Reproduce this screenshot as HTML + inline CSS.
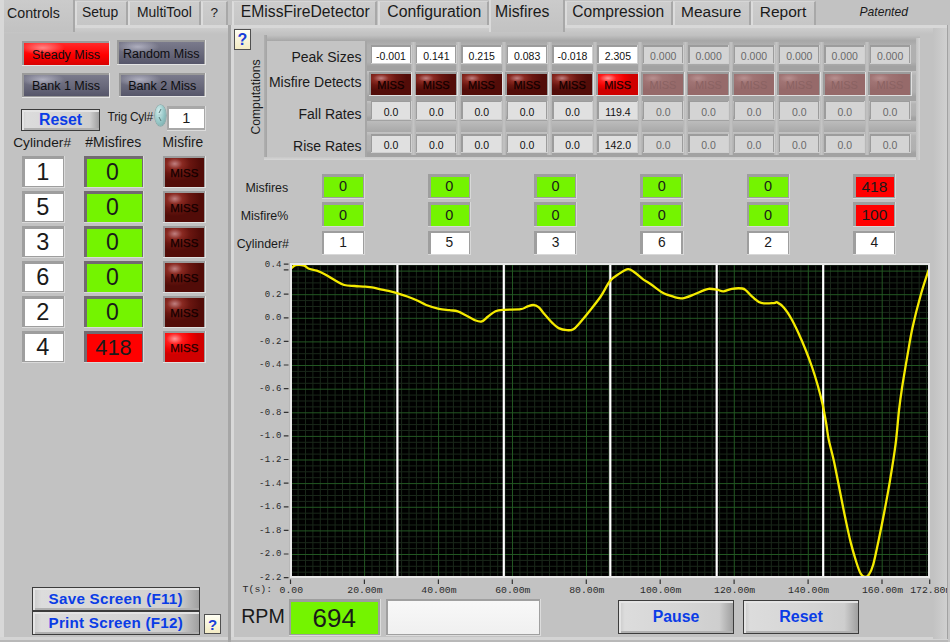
<!DOCTYPE html><html><head><meta charset="utf-8"><style>html,body{margin:0;padding:0;}body{width:950px;height:642px;position:relative;overflow:hidden;background:#c2c2c2;font-family:'Liberation Sans', sans-serif;color:#1a1a1a;}</style></head><body>
<div style="position:absolute;left:0.0px;top:25.0px;width:228.0px;height:617.0px;background:#c2c2c2;box-sizing:border-box;"></div>
<div style="position:absolute;left:0.0px;top:25.0px;width:228.0px;height:3.0px;background:#d8d8d8;"></div>
<div style="position:absolute;left:0.0px;top:28.0px;width:228.0px;height:6.0px;background:linear-gradient(180deg,#cdcdcd,#c2c2c2);"></div>
<div style="position:absolute;left:0.0px;top:25.0px;width:3.5px;height:617.0px;background:#d8d8d8;"></div>
<div style="position:absolute;left:0.0px;top:637.0px;width:228.0px;height:3.0px;background:#d4d4d4;"></div>
<div style="position:absolute;left:0.0px;top:640.0px;width:228.0px;height:2.0px;background:#b8b8b8;"></div>
<div style="position:absolute;left:75.0px;top:1.0px;width:52.5px;height:24.0px;background:linear-gradient(180deg,#cdcdcd 0%,#c6c6c6 100%);border-left:2.5px solid #dcdcdc;border-top:1px solid #d6d6d6;border-right:2px solid #a8a8a8;box-sizing:border-box;"></div>
<div style="position:absolute;left:82.0px;top:6.0px;font-size:13.9px;line-height:13.9px;white-space:nowrap;font-family:'Liberation Sans', sans-serif;">Setup</div>
<div style="position:absolute;left:127.5px;top:1.0px;width:73.5px;height:24.0px;background:linear-gradient(180deg,#cdcdcd 0%,#c6c6c6 100%);border-left:2.5px solid #dcdcdc;border-top:1px solid #d6d6d6;border-right:2px solid #a8a8a8;box-sizing:border-box;"></div>
<div style="position:absolute;left:137.0px;top:6.0px;font-size:13.9px;line-height:13.9px;white-space:nowrap;font-family:'Liberation Sans', sans-serif;">MultiTool</div>
<div style="position:absolute;left:201.0px;top:1.0px;width:26.5px;height:24.0px;background:linear-gradient(180deg,#cdcdcd 0%,#c6c6c6 100%);border-left:2.5px solid #dcdcdc;border-top:1px solid #d6d6d6;border-right:2px solid #a8a8a8;box-sizing:border-box;"></div>
<div style="position:absolute;left:210.6px;top:6.3px;font-size:13.6px;line-height:13.6px;white-space:nowrap;font-family:'Liberation Sans', sans-serif;">?</div>
<div style="position:absolute;left:0.0px;top:0.0px;width:75.0px;height:32.0px;background:linear-gradient(180deg,#cbcbcb 0%,#c2c2c2 100%);border-left:2.5px solid #dadada;border-right:2px solid #a8a8a8;box-sizing:border-box;"></div>
<div style="position:absolute;left:7.0px;top:6.3px;font-size:14.2px;line-height:14.2px;white-space:nowrap;font-family:'Liberation Sans', sans-serif;">Controls</div>
<div style="position:absolute;left:0.0px;top:0.0px;width:3.5px;height:32.0px;background:#d8d8d8;"></div>
<div style="position:absolute;left:22.0px;top:41.0px;width:88.0px;height:25.0px;background:#9a9a9a;border-bottom:1px solid #e4e4e4;border-right:1px solid #e4e4e4;box-sizing:border-box;"></div>
<div style="position:absolute;left:23.5px;top:42.5px;width:85.0px;height:22.0px;background:linear-gradient(180deg,#ff2a2a 0%,#ff0000 55%,#d80000 100%);"></div>
<div style="position:absolute;left:23.5px;top:42.5px;width:85.0px;height:22.0px;background:radial-gradient(ellipse 22px 7px at 22% 22%, rgba(255,170,170,0.75), rgba(255,0,0,0) 100%);"></div>
<div style="position:absolute;left:23.5px;top:48.5px;width:85.0px;font-size:12.5px;line-height:12.5px;white-space:nowrap;font-family:'Liberation Sans', sans-serif;text-align:center;color:#0d0d10;">Steady Miss</div>
<div style="position:absolute;left:117.0px;top:40.0px;width:88.5px;height:25.0px;background:#9a9a9a;border-bottom:1px solid #e4e4e4;border-right:1px solid #e4e4e4;box-sizing:border-box;"></div>
<div style="position:absolute;left:118.5px;top:41.5px;width:85.5px;height:22.0px;background:linear-gradient(180deg,#7a7a8c 0%,#6a6a7c 50%,#56566a 100%);"></div>
<div style="position:absolute;left:118.5px;top:41.5px;width:85.5px;height:22.0px;background:radial-gradient(ellipse 22px 7px at 22% 22%, rgba(200,200,215,0.7), rgba(120,120,140,0) 100%);"></div>
<div style="position:absolute;left:118.5px;top:47.5px;width:85.5px;font-size:12.5px;line-height:12.5px;white-space:nowrap;font-family:'Liberation Sans', sans-serif;text-align:center;color:#0d0d10;">Random Miss</div>
<div style="position:absolute;left:22.0px;top:73.0px;width:88.0px;height:24.5px;background:#9a9a9a;border-bottom:1px solid #e4e4e4;border-right:1px solid #e4e4e4;box-sizing:border-box;"></div>
<div style="position:absolute;left:23.5px;top:74.5px;width:85.0px;height:21.5px;background:linear-gradient(180deg,#7a7a8c 0%,#6a6a7c 50%,#56566a 100%);"></div>
<div style="position:absolute;left:23.5px;top:74.5px;width:85.0px;height:21.5px;background:radial-gradient(ellipse 22px 7px at 22% 22%, rgba(200,200,215,0.7), rgba(120,120,140,0) 100%);"></div>
<div style="position:absolute;left:23.5px;top:80.3px;width:85.0px;font-size:12.5px;line-height:12.5px;white-space:nowrap;font-family:'Liberation Sans', sans-serif;text-align:center;color:#0d0d10;">Bank 1 Miss</div>
<div style="position:absolute;left:119.0px;top:73.0px;width:86.5px;height:24.0px;background:#9a9a9a;border-bottom:1px solid #e4e4e4;border-right:1px solid #e4e4e4;box-sizing:border-box;"></div>
<div style="position:absolute;left:120.5px;top:74.5px;width:83.5px;height:21.0px;background:linear-gradient(180deg,#7a7a8c 0%,#6a6a7c 50%,#56566a 100%);"></div>
<div style="position:absolute;left:120.5px;top:74.5px;width:83.5px;height:21.0px;background:radial-gradient(ellipse 22px 7px at 22% 22%, rgba(200,200,215,0.7), rgba(120,120,140,0) 100%);"></div>
<div style="position:absolute;left:120.5px;top:80.0px;width:83.5px;font-size:12.5px;line-height:12.5px;white-space:nowrap;font-family:'Liberation Sans', sans-serif;text-align:center;color:#0d0d10;">Bank 2 Miss</div>
<div style="position:absolute;left:21.0px;top:108.5px;width:79.0px;height:22.5px;background:linear-gradient(90deg,#c8c8c8 0%,#dcdcdc 5%,#d6d6d6 50%,#cecece 88%,#a0a0a0 100%);border:1px solid #3c3c3c;box-sizing:border-box;box-shadow:inset 2px 2px 0 #e4e4e4, inset 0 -2px 0 #b0b0b0;"></div>
<div style="position:absolute;left:21.0px;top:112.1px;width:79px;font-size:15.8px;line-height:15.8px;white-space:nowrap;font-family:'Liberation Sans', sans-serif;text-align:center;color:#0a3ce6;font-weight:bold;word-spacing:0px;letter-spacing:0px;">Reset</div>
<div style="position:absolute;left:107.6px;top:111.0px;font-size:12px;line-height:12px;white-space:nowrap;font-family:'Liberation Sans', sans-serif;letter-spacing:-0.25px;">Trig Cyl#</div>
<div style="position:absolute;left:155.3px;top:104.6px;width:10.5px;height:21.0px;background:radial-gradient(ellipse at 35% 30%, #d4eeee 0%, #9ccccc 45%, #6c9e9e 100%);border-radius:50%;box-shadow:0 0 0 0.6px #78a0a0;"></div>
<svg style="position:absolute;left:155px;top:104px" width="11" height="22"><path d="M4 9 L6 5" stroke="#5a7a7a" stroke-width="1" fill="none"/><path d="M4 13 L6 17" stroke="#5a7a7a" stroke-width="1" fill="none"/><path d="M3 11 L8 11" stroke="#aacccc" stroke-width="0.8"/></svg>
<div style="position:absolute;left:167.0px;top:106.0px;width:39.0px;height:25.0px;background:#a8a8a8;border-right:1px solid #dcdcdc;border-bottom:1px solid #dcdcdc;box-sizing:border-box;"></div>
<div style="position:absolute;left:169.0px;top:108.7px;width:34.6px;height:19.7px;background:#fff;"></div>
<div style="position:absolute;left:171.3px;top:111.2px;width:30px;font-size:14.5px;line-height:14.5px;white-space:nowrap;font-family:'Liberation Sans', sans-serif;text-align:center;">1</div>
<div style="position:absolute;left:13.2px;top:135.6px;font-size:13.7px;line-height:13.7px;white-space:nowrap;font-family:'Liberation Sans', sans-serif;">Cylinder#</div>
<div style="position:absolute;left:85.3px;top:135.3px;font-size:14px;line-height:14px;white-space:nowrap;font-family:'Liberation Sans', sans-serif;">#Misfires</div>
<div style="position:absolute;left:162.6px;top:135.5px;font-size:13.8px;line-height:13.8px;white-space:nowrap;font-family:'Liberation Sans', sans-serif;">Misfire</div>
<div style="position:absolute;left:21.5px;top:155.5px;width:43.0px;height:32.0px;background:#9e9e9e;border-right:1px solid #dadada;border-bottom:1px solid #dadada;box-sizing:border-box;"></div>
<div style="position:absolute;left:24.7px;top:158.8px;width:38.2px;height:26.8px;background:#fff;"></div>
<div style="position:absolute;left:23.8px;top:161.1px;width:38px;font-size:23.5px;line-height:23.5px;white-space:nowrap;font-family:'Liberation Sans', sans-serif;text-align:center;">1</div>
<div style="position:absolute;left:84.1px;top:155.5px;width:60.2px;height:32.0px;background:#726a70;border-right:1px solid #d8d8d8;border-bottom:1px solid #d8d8d8;box-sizing:border-box;"></div>
<div style="position:absolute;left:86.8px;top:158.5px;width:55.4px;height:28.2px;background:#74f400;"></div>
<div style="position:absolute;left:85.0px;top:161.0px;width:55px;font-size:23px;line-height:23px;white-space:nowrap;font-family:'Liberation Sans', sans-serif;text-align:center;">0</div>
<div style="position:absolute;left:162.8px;top:156.0px;width:43.1px;height:31.7px;background:#9c9c9c;border-bottom:1px solid #e0e0e0;border-right:1px solid #e0e0e0;box-sizing:border-box;"></div>
<div style="position:absolute;left:164.5px;top:158.0px;width:39.7px;height:28.7px;background:radial-gradient(ellipse 65% 60% at 25% 20%, #c08080 0%, #8a2a22 30%, #6a1610 60%, #520c08 100%);"></div>
<div style="position:absolute;left:164.5px;top:167.8px;width:39.69999999999999px;font-size:11.5px;line-height:11.5px;white-space:nowrap;font-family:'Liberation Sans', sans-serif;text-align:center;color:#120000;-webkit-text-stroke:0.25px #120000;">MISS</div>
<div style="position:absolute;left:21.5px;top:190.6px;width:43.0px;height:32.0px;background:#9e9e9e;border-right:1px solid #dadada;border-bottom:1px solid #dadada;box-sizing:border-box;"></div>
<div style="position:absolute;left:24.7px;top:193.9px;width:38.2px;height:26.8px;background:#fff;"></div>
<div style="position:absolute;left:23.8px;top:196.2px;width:38px;font-size:23.5px;line-height:23.5px;white-space:nowrap;font-family:'Liberation Sans', sans-serif;text-align:center;">5</div>
<div style="position:absolute;left:84.1px;top:190.6px;width:60.2px;height:32.0px;background:#726a70;border-right:1px solid #d8d8d8;border-bottom:1px solid #d8d8d8;box-sizing:border-box;"></div>
<div style="position:absolute;left:86.8px;top:193.6px;width:55.4px;height:28.2px;background:#74f400;"></div>
<div style="position:absolute;left:85.0px;top:196.1px;width:55px;font-size:23px;line-height:23px;white-space:nowrap;font-family:'Liberation Sans', sans-serif;text-align:center;">0</div>
<div style="position:absolute;left:162.8px;top:191.1px;width:43.1px;height:31.7px;background:#9c9c9c;border-bottom:1px solid #e0e0e0;border-right:1px solid #e0e0e0;box-sizing:border-box;"></div>
<div style="position:absolute;left:164.5px;top:193.1px;width:39.7px;height:28.7px;background:radial-gradient(ellipse 65% 60% at 25% 20%, #c08080 0%, #8a2a22 30%, #6a1610 60%, #520c08 100%);"></div>
<div style="position:absolute;left:164.5px;top:202.8px;width:39.69999999999999px;font-size:11.5px;line-height:11.5px;white-space:nowrap;font-family:'Liberation Sans', sans-serif;text-align:center;color:#120000;-webkit-text-stroke:0.25px #120000;">MISS</div>
<div style="position:absolute;left:21.5px;top:225.6px;width:43.0px;height:32.0px;background:#9e9e9e;border-right:1px solid #dadada;border-bottom:1px solid #dadada;box-sizing:border-box;"></div>
<div style="position:absolute;left:24.7px;top:228.9px;width:38.2px;height:26.8px;background:#fff;"></div>
<div style="position:absolute;left:23.8px;top:231.2px;width:38px;font-size:23.5px;line-height:23.5px;white-space:nowrap;font-family:'Liberation Sans', sans-serif;text-align:center;">3</div>
<div style="position:absolute;left:84.1px;top:225.6px;width:60.2px;height:32.0px;background:#726a70;border-right:1px solid #d8d8d8;border-bottom:1px solid #d8d8d8;box-sizing:border-box;"></div>
<div style="position:absolute;left:86.8px;top:228.6px;width:55.4px;height:28.2px;background:#74f400;"></div>
<div style="position:absolute;left:85.0px;top:231.2px;width:55px;font-size:23px;line-height:23px;white-space:nowrap;font-family:'Liberation Sans', sans-serif;text-align:center;">0</div>
<div style="position:absolute;left:162.8px;top:226.1px;width:43.1px;height:31.7px;background:#9c9c9c;border-bottom:1px solid #e0e0e0;border-right:1px solid #e0e0e0;box-sizing:border-box;"></div>
<div style="position:absolute;left:164.5px;top:228.1px;width:39.7px;height:28.7px;background:radial-gradient(ellipse 65% 60% at 25% 20%, #c08080 0%, #8a2a22 30%, #6a1610 60%, #520c08 100%);"></div>
<div style="position:absolute;left:164.5px;top:237.9px;width:39.69999999999999px;font-size:11.5px;line-height:11.5px;white-space:nowrap;font-family:'Liberation Sans', sans-serif;text-align:center;color:#120000;-webkit-text-stroke:0.25px #120000;">MISS</div>
<div style="position:absolute;left:21.5px;top:260.7px;width:43.0px;height:32.0px;background:#9e9e9e;border-right:1px solid #dadada;border-bottom:1px solid #dadada;box-sizing:border-box;"></div>
<div style="position:absolute;left:24.7px;top:264.0px;width:38.2px;height:26.8px;background:#fff;"></div>
<div style="position:absolute;left:23.8px;top:266.3px;width:38px;font-size:23.5px;line-height:23.5px;white-space:nowrap;font-family:'Liberation Sans', sans-serif;text-align:center;">6</div>
<div style="position:absolute;left:84.1px;top:260.7px;width:60.2px;height:32.0px;background:#726a70;border-right:1px solid #d8d8d8;border-bottom:1px solid #d8d8d8;box-sizing:border-box;"></div>
<div style="position:absolute;left:86.8px;top:263.7px;width:55.4px;height:28.2px;background:#74f400;"></div>
<div style="position:absolute;left:85.0px;top:266.2px;width:55px;font-size:23px;line-height:23px;white-space:nowrap;font-family:'Liberation Sans', sans-serif;text-align:center;">0</div>
<div style="position:absolute;left:162.8px;top:261.2px;width:43.1px;height:31.7px;background:#9c9c9c;border-bottom:1px solid #e0e0e0;border-right:1px solid #e0e0e0;box-sizing:border-box;"></div>
<div style="position:absolute;left:164.5px;top:263.2px;width:39.7px;height:28.7px;background:radial-gradient(ellipse 65% 60% at 25% 20%, #c08080 0%, #8a2a22 30%, #6a1610 60%, #520c08 100%);"></div>
<div style="position:absolute;left:164.5px;top:272.9px;width:39.69999999999999px;font-size:11.5px;line-height:11.5px;white-space:nowrap;font-family:'Liberation Sans', sans-serif;text-align:center;color:#120000;-webkit-text-stroke:0.25px #120000;">MISS</div>
<div style="position:absolute;left:21.5px;top:295.7px;width:43.0px;height:32.0px;background:#9e9e9e;border-right:1px solid #dadada;border-bottom:1px solid #dadada;box-sizing:border-box;"></div>
<div style="position:absolute;left:24.7px;top:299.0px;width:38.2px;height:26.8px;background:#fff;"></div>
<div style="position:absolute;left:23.8px;top:301.3px;width:38px;font-size:23.5px;line-height:23.5px;white-space:nowrap;font-family:'Liberation Sans', sans-serif;text-align:center;">2</div>
<div style="position:absolute;left:84.1px;top:295.7px;width:60.2px;height:32.0px;background:#726a70;border-right:1px solid #d8d8d8;border-bottom:1px solid #d8d8d8;box-sizing:border-box;"></div>
<div style="position:absolute;left:86.8px;top:298.7px;width:55.4px;height:28.2px;background:#74f400;"></div>
<div style="position:absolute;left:85.0px;top:301.3px;width:55px;font-size:23px;line-height:23px;white-space:nowrap;font-family:'Liberation Sans', sans-serif;text-align:center;">0</div>
<div style="position:absolute;left:162.8px;top:296.2px;width:43.1px;height:31.7px;background:#9c9c9c;border-bottom:1px solid #e0e0e0;border-right:1px solid #e0e0e0;box-sizing:border-box;"></div>
<div style="position:absolute;left:164.5px;top:298.2px;width:39.7px;height:28.7px;background:radial-gradient(ellipse 65% 60% at 25% 20%, #c08080 0%, #8a2a22 30%, #6a1610 60%, #520c08 100%);"></div>
<div style="position:absolute;left:164.5px;top:308.0px;width:39.69999999999999px;font-size:11.5px;line-height:11.5px;white-space:nowrap;font-family:'Liberation Sans', sans-serif;text-align:center;color:#120000;-webkit-text-stroke:0.25px #120000;">MISS</div>
<div style="position:absolute;left:21.5px;top:330.8px;width:43.0px;height:32.0px;background:#9e9e9e;border-right:1px solid #dadada;border-bottom:1px solid #dadada;box-sizing:border-box;"></div>
<div style="position:absolute;left:24.7px;top:334.1px;width:38.2px;height:26.8px;background:#fff;"></div>
<div style="position:absolute;left:23.8px;top:336.4px;width:38px;font-size:23.5px;line-height:23.5px;white-space:nowrap;font-family:'Liberation Sans', sans-serif;text-align:center;">4</div>
<div style="position:absolute;left:84.1px;top:330.8px;width:60.2px;height:32.0px;background:#726a70;border-right:1px solid #d8d8d8;border-bottom:1px solid #d8d8d8;box-sizing:border-box;"></div>
<div style="position:absolute;left:86.8px;top:333.8px;width:55.4px;height:28.2px;background:#ff0000;"></div>
<div style="position:absolute;left:86.0px;top:337.3px;width:55px;font-size:21.8px;line-height:21.8px;white-space:nowrap;font-family:'Liberation Sans', sans-serif;text-align:center;">418</div>
<div style="position:absolute;left:162.8px;top:331.3px;width:43.1px;height:31.7px;background:#9c9c9c;border-bottom:1px solid #e0e0e0;border-right:1px solid #e0e0e0;box-sizing:border-box;"></div>
<div style="position:absolute;left:164.5px;top:333.3px;width:39.7px;height:28.7px;background:radial-gradient(ellipse 60% 55% at 25% 20%, #ff9a9a 0%, #ff1c1c 35%, #f00000 70%, #d00000 100%);"></div>
<div style="position:absolute;left:164.5px;top:343.1px;width:39.69999999999999px;font-size:11.5px;line-height:11.5px;white-space:nowrap;font-family:'Liberation Sans', sans-serif;text-align:center;color:#200000;-webkit-text-stroke:0.25px #200000;">MISS</div>
<div style="position:absolute;left:32.0px;top:587.0px;width:167.5px;height:24.0px;background:linear-gradient(90deg,#c8c8c8 0%,#dcdcdc 5%,#d6d6d6 50%,#cecece 88%,#a0a0a0 100%);border:1px solid #3c3c3c;box-sizing:border-box;box-shadow:inset 2px 2px 0 #e4e4e4, inset 0 -2px 0 #b0b0b0;"></div>
<div style="position:absolute;left:32.0px;top:590.8px;width:167.5px;font-size:15.2px;line-height:15.2px;white-space:nowrap;font-family:'Liberation Sans', sans-serif;text-align:center;color:#0a3ce6;font-weight:bold;word-spacing:0px;letter-spacing:0.25px;">Save Screen (F11)</div>
<div style="position:absolute;left:32.0px;top:611.0px;width:167.5px;height:23.5px;background:linear-gradient(90deg,#c8c8c8 0%,#dcdcdc 5%,#d6d6d6 50%,#cecece 88%,#a0a0a0 100%);border:1px solid #3c3c3c;box-sizing:border-box;box-shadow:inset 2px 2px 0 #e4e4e4, inset 0 -2px 0 #b0b0b0;"></div>
<div style="position:absolute;left:32.0px;top:614.6px;width:167.5px;font-size:15.2px;line-height:15.2px;white-space:nowrap;font-family:'Liberation Sans', sans-serif;text-align:center;color:#0a3ce6;font-weight:bold;word-spacing:0px;letter-spacing:0.25px;">Print Screen (F12)</div>
<div style="position:absolute;left:204.0px;top:613.6px;width:17.0px;height:20.1px;background:linear-gradient(180deg,#fffff4,#f4ecc4);border:1.5px solid #505050;box-sizing:border-box;"></div>
<div style="position:absolute;left:204.0px;top:616.5px;width:17px;font-size:15px;line-height:15px;white-space:nowrap;font-family:'Liberation Sans', sans-serif;text-align:center;color:#1a3fd8;font-weight:bold;">?</div>
<div style="position:absolute;left:227.5px;top:25.0px;width:3.0px;height:617.0px;background:#a6a6a6;"></div>
<div style="position:absolute;left:230.5px;top:25.0px;width:719.5px;height:617.0px;background:#c2c2c2;box-sizing:border-box;"></div>
<div style="position:absolute;left:230.5px;top:25.0px;width:719.5px;height:3.0px;background:#d8d8d8;"></div>
<div style="position:absolute;left:230.5px;top:28.0px;width:719.5px;height:6.0px;background:linear-gradient(180deg,#cdcdcd,#c2c2c2);"></div>
<div style="position:absolute;left:230.5px;top:25.0px;width:3.0px;height:617.0px;background:#d8d8d8;"></div>
<div style="position:absolute;left:230.5px;top:637.0px;width:720.0px;height:3.0px;background:#d4d4d4;"></div>
<div style="position:absolute;left:230.5px;top:640.0px;width:720.0px;height:2.0px;background:#b8b8b8;"></div>
<div style="position:absolute;left:231.7px;top:1.0px;width:145.8px;height:24.0px;background:linear-gradient(180deg,#cdcdcd 0%,#c6c6c6 100%);border-left:2.5px solid #dcdcdc;border-top:1px solid #d6d6d6;border-right:2px solid #a8a8a8;box-sizing:border-box;"></div>
<div style="position:absolute;left:240.8px;top:3.7px;font-size:15.7px;line-height:15.7px;white-space:nowrap;font-family:'Liberation Sans', sans-serif;">EMissFireDetector</div>
<div style="position:absolute;left:377.5px;top:1.0px;width:111.5px;height:24.0px;background:linear-gradient(180deg,#cdcdcd 0%,#c6c6c6 100%);border-left:2.5px solid #dcdcdc;border-top:1px solid #d6d6d6;border-right:2px solid #a8a8a8;box-sizing:border-box;"></div>
<div style="position:absolute;left:387.3px;top:3.6px;font-size:15.8px;line-height:15.8px;white-space:nowrap;font-family:'Liberation Sans', sans-serif;">Configuration</div>
<div style="position:absolute;left:565.0px;top:1.0px;width:107.5px;height:24.0px;background:linear-gradient(180deg,#cdcdcd 0%,#c6c6c6 100%);border-left:2.5px solid #dcdcdc;border-top:1px solid #d6d6d6;border-right:2px solid #a8a8a8;box-sizing:border-box;"></div>
<div style="position:absolute;left:572.3px;top:3.8px;font-size:15.6px;line-height:15.6px;white-space:nowrap;font-family:'Liberation Sans', sans-serif;">Compression</div>
<div style="position:absolute;left:672.5px;top:1.0px;width:78.5px;height:24.0px;background:linear-gradient(180deg,#cdcdcd 0%,#c6c6c6 100%);border-left:2.5px solid #dcdcdc;border-top:1px solid #d6d6d6;border-right:2px solid #a8a8a8;box-sizing:border-box;"></div>
<div style="position:absolute;left:681.0px;top:3.9px;font-size:15.5px;line-height:15.5px;white-space:nowrap;font-family:'Liberation Sans', sans-serif;">Measure</div>
<div style="position:absolute;left:751.0px;top:1.0px;width:64.5px;height:24.0px;background:linear-gradient(180deg,#cdcdcd 0%,#c6c6c6 100%);border-left:2.5px solid #dcdcdc;border-top:1px solid #d6d6d6;border-right:2px solid #a8a8a8;box-sizing:border-box;"></div>
<div style="position:absolute;left:759.8px;top:3.9px;font-size:15.5px;line-height:15.5px;white-space:nowrap;font-family:'Liberation Sans', sans-serif;">Report</div>
<div style="position:absolute;left:489.0px;top:0.0px;width:76.0px;height:32.0px;background:linear-gradient(180deg,#cbcbcb 0%,#c2c2c2 100%);border-left:2.5px solid #dadada;border-right:2px solid #a8a8a8;box-sizing:border-box;"></div>
<div style="position:absolute;left:495.0px;top:3.6px;font-size:15.8px;line-height:15.8px;white-space:nowrap;font-family:'Liberation Sans', sans-serif;">Misfires</div>
<div style="position:absolute;left:859.5px;top:5.8px;font-size:12.1px;line-height:12.1px;white-space:nowrap;font-family:'Liberation Sans', sans-serif;font-style:italic;">Patented</div>
<div style="position:absolute;left:233.6px;top:29.0px;width:17.4px;height:20.5px;background:linear-gradient(180deg,#fffff4,#f4ecc4);border:1.5px solid #505050;box-sizing:border-box;"></div>
<div style="position:absolute;left:233.6px;top:31.5px;width:17.400000000000006px;font-size:16px;line-height:16px;white-space:nowrap;font-family:'Liberation Sans', sans-serif;text-align:center;color:#1a3fd8;font-weight:bold;">?</div>
<div style="position:absolute;left:263.5px;top:35.0px;width:656.5px;height:125.0px;background:#c4c4c4;"></div>
<div style="position:absolute;left:263.5px;top:35.0px;width:656.5px;height:5.5px;background:linear-gradient(180deg,#c2c2c2,#a6a6a6);"></div>
<div style="position:absolute;left:263.5px;top:35.0px;width:3.5px;height:125.0px;background:linear-gradient(90deg,#b0b0b0,#a4a4a4);"></div>
<div style="position:absolute;left:263.5px;top:156.5px;width:656.5px;height:3.5px;background:linear-gradient(180deg,#c8c8c8,#d6d6d6);"></div>
<div style="position:absolute;left:915.5px;top:38.0px;width:4.5px;height:122.0px;background:linear-gradient(90deg,#c0c0c0,#d4d4d4);"></div>
<div style="position:absolute;left:215.7px;top:89.7px;width:80px;height:14px;line-height:14px;font-size:12.2px;text-align:center;transform:rotate(-90deg);white-space:nowrap;">Computations</div>
<div style="position:absolute;right:588.5px;top:50.3px;font-size:14px;line-height:14px;white-space:nowrap;font-family:'Liberation Sans', sans-serif;text-align:right;">Peak Sizes</div>
<div style="position:absolute;right:588.5px;top:75.3px;font-size:14px;line-height:14px;white-space:nowrap;font-family:'Liberation Sans', sans-serif;text-align:right;">Misfire Detects</div>
<div style="position:absolute;right:588.5px;top:106.9px;font-size:14px;line-height:14px;white-space:nowrap;font-family:'Liberation Sans', sans-serif;text-align:right;">Fall Rates</div>
<div style="position:absolute;right:588.5px;top:139.3px;font-size:14px;line-height:14px;white-space:nowrap;font-family:'Liberation Sans', sans-serif;text-align:right;">Rise Rates</div>
<div style="position:absolute;left:365.0px;top:40.5px;width:551.0px;height:116.5px;background:#bdbdbd;"></div>
<div style="position:absolute;left:365.0px;top:40.5px;width:2.0px;height:116.5px;background:#a6a6a6;"></div>
<div style="position:absolute;left:367.0px;top:40.5px;width:549.0px;height:30.0px;background:linear-gradient(180deg,#a8a8a8 0%,#b0b0b0 15%,#b0b0b0 70%,#a2a2a2 85%,#a2a2a2 100%);"></div>
<div style="position:absolute;left:367.0px;top:70.5px;width:549.0px;height:30.0px;background:linear-gradient(180deg,#c4c4c4 0%,#b4b4b4 15%,#b0b0b0 70%,#a2a2a2 85%,#a2a2a2 100%);"></div>
<div style="position:absolute;left:367.0px;top:100.5px;width:549.0px;height:20.5px;background:linear-gradient(180deg,#c4c4c4 0%,#b4b4b4 15%,#b0b0b0 70%,#a2a2a2 85%,#a2a2a2 100%);"></div>
<div style="position:absolute;left:367.0px;top:132.0px;width:549.0px;height:25.0px;background:linear-gradient(180deg,#c4c4c4 0%,#b4b4b4 15%,#b0b0b0 70%,#a2a2a2 85%,#a2a2a2 100%);"></div>
<div style="position:absolute;left:367.0px;top:121.0px;width:549.0px;height:11.0px;background:linear-gradient(180deg,#bcbcbc,#a8a8a8);"></div>
<div style="position:absolute;left:411.0px;top:41.5px;width:4.5px;height:113.5px;background:linear-gradient(90deg,#b4b4b4,#c4c4c4 50%,#b4b4b4);"></div>
<div style="position:absolute;left:456.4px;top:41.5px;width:4.5px;height:113.5px;background:linear-gradient(90deg,#b4b4b4,#c4c4c4 50%,#b4b4b4);"></div>
<div style="position:absolute;left:501.7px;top:41.5px;width:4.5px;height:113.5px;background:linear-gradient(90deg,#b4b4b4,#c4c4c4 50%,#b4b4b4);"></div>
<div style="position:absolute;left:547.1px;top:41.5px;width:4.5px;height:113.5px;background:linear-gradient(90deg,#b4b4b4,#c4c4c4 50%,#b4b4b4);"></div>
<div style="position:absolute;left:592.5px;top:41.5px;width:4.5px;height:113.5px;background:linear-gradient(90deg,#b4b4b4,#c4c4c4 50%,#b4b4b4);"></div>
<div style="position:absolute;left:637.9px;top:41.5px;width:4.5px;height:113.5px;background:linear-gradient(90deg,#b4b4b4,#c4c4c4 50%,#b4b4b4);"></div>
<div style="position:absolute;left:683.2px;top:41.5px;width:4.5px;height:113.5px;background:linear-gradient(90deg,#b4b4b4,#c4c4c4 50%,#b4b4b4);"></div>
<div style="position:absolute;left:728.6px;top:41.5px;width:4.5px;height:113.5px;background:linear-gradient(90deg,#b4b4b4,#c4c4c4 50%,#b4b4b4);"></div>
<div style="position:absolute;left:774.0px;top:41.5px;width:4.5px;height:113.5px;background:linear-gradient(90deg,#b4b4b4,#c4c4c4 50%,#b4b4b4);"></div>
<div style="position:absolute;left:819.3px;top:41.5px;width:4.5px;height:113.5px;background:linear-gradient(90deg,#b4b4b4,#c4c4c4 50%,#b4b4b4);"></div>
<div style="position:absolute;left:864.7px;top:41.5px;width:4.5px;height:113.5px;background:linear-gradient(90deg,#b4b4b4,#c4c4c4 50%,#b4b4b4);"></div>
<div style="position:absolute;left:370.5px;top:45.3px;width:41.0px;height:18.8px;background:#9c9c9c;border-right:1px solid #d0d0d0;border-bottom:1px solid #d0d0d0;box-sizing:border-box;"></div>
<div style="position:absolute;left:372.0px;top:46.8px;width:38.0px;height:15.8px;background:#ffffff;"></div>
<div style="position:absolute;left:372.0px;top:50.8px;width:38px;font-size:10.5px;line-height:10.5px;white-space:nowrap;font-family:'Liberation Sans', sans-serif;text-align:center;color:#111;">-0.001</div>
<div style="position:absolute;left:370.5px;top:100.8px;width:41.0px;height:19.3px;background:#9c9c9c;border-right:1px solid #d0d0d0;border-bottom:1px solid #d0d0d0;box-sizing:border-box;"></div>
<div style="position:absolute;left:372.0px;top:102.3px;width:38.0px;height:16.3px;background:#e0e0e0;"></div>
<div style="position:absolute;left:372.0px;top:106.6px;width:38px;font-size:10.5px;line-height:10.5px;white-space:nowrap;font-family:'Liberation Sans', sans-serif;text-align:center;color:#111;">0.0</div>
<div style="position:absolute;left:370.5px;top:134.3px;width:41.0px;height:18.8px;background:#9c9c9c;border-right:1px solid #d0d0d0;border-bottom:1px solid #d0d0d0;box-sizing:border-box;"></div>
<div style="position:absolute;left:372.0px;top:135.8px;width:38.0px;height:15.8px;background:#e0e0e0;"></div>
<div style="position:absolute;left:372.0px;top:139.8px;width:38px;font-size:10.5px;line-height:10.5px;white-space:nowrap;font-family:'Liberation Sans', sans-serif;text-align:center;color:#111;">0.0</div>
<div style="position:absolute;left:369.1px;top:72.2px;width:43.4px;height:23.6px;background:#9c9c9c;border-bottom:1px solid #e0e0e0;border-right:1px solid #e0e0e0;box-sizing:border-box;"></div>
<div style="position:absolute;left:370.8px;top:74.2px;width:40.0px;height:20.6px;background:radial-gradient(ellipse 65% 60% at 25% 20%, #c08080 0%, #8a2a22 30%, #6a1610 60%, #520c08 100%);"></div>
<div style="position:absolute;left:370.8px;top:80.1px;width:40.0px;font-size:11px;line-height:11px;white-space:nowrap;font-family:'Liberation Sans', sans-serif;text-align:center;color:#120000;-webkit-text-stroke:0.25px #120000;">MISS</div>
<div style="position:absolute;left:415.9px;top:45.3px;width:41.0px;height:18.8px;background:#9c9c9c;border-right:1px solid #d0d0d0;border-bottom:1px solid #d0d0d0;box-sizing:border-box;"></div>
<div style="position:absolute;left:417.4px;top:46.8px;width:38.0px;height:15.8px;background:#ffffff;"></div>
<div style="position:absolute;left:417.4px;top:50.8px;width:38px;font-size:10.5px;line-height:10.5px;white-space:nowrap;font-family:'Liberation Sans', sans-serif;text-align:center;color:#111;">0.141</div>
<div style="position:absolute;left:415.9px;top:100.8px;width:41.0px;height:19.3px;background:#9c9c9c;border-right:1px solid #d0d0d0;border-bottom:1px solid #d0d0d0;box-sizing:border-box;"></div>
<div style="position:absolute;left:417.4px;top:102.3px;width:38.0px;height:16.3px;background:#e0e0e0;"></div>
<div style="position:absolute;left:417.4px;top:106.6px;width:38px;font-size:10.5px;line-height:10.5px;white-space:nowrap;font-family:'Liberation Sans', sans-serif;text-align:center;color:#111;">0.0</div>
<div style="position:absolute;left:415.9px;top:134.3px;width:41.0px;height:18.8px;background:#9c9c9c;border-right:1px solid #d0d0d0;border-bottom:1px solid #d0d0d0;box-sizing:border-box;"></div>
<div style="position:absolute;left:417.4px;top:135.8px;width:38.0px;height:15.8px;background:#e0e0e0;"></div>
<div style="position:absolute;left:417.4px;top:139.8px;width:38px;font-size:10.5px;line-height:10.5px;white-space:nowrap;font-family:'Liberation Sans', sans-serif;text-align:center;color:#111;">0.0</div>
<div style="position:absolute;left:414.5px;top:72.2px;width:43.4px;height:23.6px;background:#9c9c9c;border-bottom:1px solid #e0e0e0;border-right:1px solid #e0e0e0;box-sizing:border-box;"></div>
<div style="position:absolute;left:416.2px;top:74.2px;width:40.0px;height:20.6px;background:radial-gradient(ellipse 65% 60% at 25% 20%, #c08080 0%, #8a2a22 30%, #6a1610 60%, #520c08 100%);"></div>
<div style="position:absolute;left:416.2px;top:80.1px;width:40.0px;font-size:11px;line-height:11px;white-space:nowrap;font-family:'Liberation Sans', sans-serif;text-align:center;color:#120000;-webkit-text-stroke:0.25px #120000;">MISS</div>
<div style="position:absolute;left:461.2px;top:45.3px;width:41.0px;height:18.8px;background:#9c9c9c;border-right:1px solid #d0d0d0;border-bottom:1px solid #d0d0d0;box-sizing:border-box;"></div>
<div style="position:absolute;left:462.7px;top:46.8px;width:38.0px;height:15.8px;background:#ffffff;"></div>
<div style="position:absolute;left:462.7px;top:50.8px;width:38px;font-size:10.5px;line-height:10.5px;white-space:nowrap;font-family:'Liberation Sans', sans-serif;text-align:center;color:#111;">0.215</div>
<div style="position:absolute;left:461.2px;top:100.8px;width:41.0px;height:19.3px;background:#9c9c9c;border-right:1px solid #d0d0d0;border-bottom:1px solid #d0d0d0;box-sizing:border-box;"></div>
<div style="position:absolute;left:462.7px;top:102.3px;width:38.0px;height:16.3px;background:#e0e0e0;"></div>
<div style="position:absolute;left:462.7px;top:106.6px;width:38px;font-size:10.5px;line-height:10.5px;white-space:nowrap;font-family:'Liberation Sans', sans-serif;text-align:center;color:#111;">0.0</div>
<div style="position:absolute;left:461.2px;top:134.3px;width:41.0px;height:18.8px;background:#9c9c9c;border-right:1px solid #d0d0d0;border-bottom:1px solid #d0d0d0;box-sizing:border-box;"></div>
<div style="position:absolute;left:462.7px;top:135.8px;width:38.0px;height:15.8px;background:#e0e0e0;"></div>
<div style="position:absolute;left:462.7px;top:139.8px;width:38px;font-size:10.5px;line-height:10.5px;white-space:nowrap;font-family:'Liberation Sans', sans-serif;text-align:center;color:#111;">0.0</div>
<div style="position:absolute;left:459.8px;top:72.2px;width:43.4px;height:23.6px;background:#9c9c9c;border-bottom:1px solid #e0e0e0;border-right:1px solid #e0e0e0;box-sizing:border-box;"></div>
<div style="position:absolute;left:461.5px;top:74.2px;width:40.0px;height:20.6px;background:radial-gradient(ellipse 65% 60% at 25% 20%, #c08080 0%, #8a2a22 30%, #6a1610 60%, #520c08 100%);"></div>
<div style="position:absolute;left:461.5px;top:80.1px;width:40.0px;font-size:11px;line-height:11px;white-space:nowrap;font-family:'Liberation Sans', sans-serif;text-align:center;color:#120000;-webkit-text-stroke:0.25px #120000;">MISS</div>
<div style="position:absolute;left:506.6px;top:45.3px;width:41.0px;height:18.8px;background:#9c9c9c;border-right:1px solid #d0d0d0;border-bottom:1px solid #d0d0d0;box-sizing:border-box;"></div>
<div style="position:absolute;left:508.1px;top:46.8px;width:38.0px;height:15.8px;background:#ffffff;"></div>
<div style="position:absolute;left:508.1px;top:50.8px;width:38px;font-size:10.5px;line-height:10.5px;white-space:nowrap;font-family:'Liberation Sans', sans-serif;text-align:center;color:#111;">0.083</div>
<div style="position:absolute;left:506.6px;top:100.8px;width:41.0px;height:19.3px;background:#9c9c9c;border-right:1px solid #d0d0d0;border-bottom:1px solid #d0d0d0;box-sizing:border-box;"></div>
<div style="position:absolute;left:508.1px;top:102.3px;width:38.0px;height:16.3px;background:#e0e0e0;"></div>
<div style="position:absolute;left:508.1px;top:106.6px;width:38px;font-size:10.5px;line-height:10.5px;white-space:nowrap;font-family:'Liberation Sans', sans-serif;text-align:center;color:#111;">0.0</div>
<div style="position:absolute;left:506.6px;top:134.3px;width:41.0px;height:18.8px;background:#9c9c9c;border-right:1px solid #d0d0d0;border-bottom:1px solid #d0d0d0;box-sizing:border-box;"></div>
<div style="position:absolute;left:508.1px;top:135.8px;width:38.0px;height:15.8px;background:#e0e0e0;"></div>
<div style="position:absolute;left:508.1px;top:139.8px;width:38px;font-size:10.5px;line-height:10.5px;white-space:nowrap;font-family:'Liberation Sans', sans-serif;text-align:center;color:#111;">0.0</div>
<div style="position:absolute;left:505.2px;top:72.2px;width:43.4px;height:23.6px;background:#9c9c9c;border-bottom:1px solid #e0e0e0;border-right:1px solid #e0e0e0;box-sizing:border-box;"></div>
<div style="position:absolute;left:506.9px;top:74.2px;width:40.0px;height:20.6px;background:radial-gradient(ellipse 65% 60% at 25% 20%, #c08080 0%, #8a2a22 30%, #6a1610 60%, #520c08 100%);"></div>
<div style="position:absolute;left:506.9px;top:80.1px;width:39.99999999999994px;font-size:11px;line-height:11px;white-space:nowrap;font-family:'Liberation Sans', sans-serif;text-align:center;color:#120000;-webkit-text-stroke:0.25px #120000;">MISS</div>
<div style="position:absolute;left:552.0px;top:45.3px;width:41.0px;height:18.8px;background:#9c9c9c;border-right:1px solid #d0d0d0;border-bottom:1px solid #d0d0d0;box-sizing:border-box;"></div>
<div style="position:absolute;left:553.5px;top:46.8px;width:38.0px;height:15.8px;background:#ffffff;"></div>
<div style="position:absolute;left:553.5px;top:50.8px;width:38px;font-size:10.5px;line-height:10.5px;white-space:nowrap;font-family:'Liberation Sans', sans-serif;text-align:center;color:#111;">-0.018</div>
<div style="position:absolute;left:552.0px;top:100.8px;width:41.0px;height:19.3px;background:#9c9c9c;border-right:1px solid #d0d0d0;border-bottom:1px solid #d0d0d0;box-sizing:border-box;"></div>
<div style="position:absolute;left:553.5px;top:102.3px;width:38.0px;height:16.3px;background:#e0e0e0;"></div>
<div style="position:absolute;left:553.5px;top:106.6px;width:38px;font-size:10.5px;line-height:10.5px;white-space:nowrap;font-family:'Liberation Sans', sans-serif;text-align:center;color:#111;">0.0</div>
<div style="position:absolute;left:552.0px;top:134.3px;width:41.0px;height:18.8px;background:#9c9c9c;border-right:1px solid #d0d0d0;border-bottom:1px solid #d0d0d0;box-sizing:border-box;"></div>
<div style="position:absolute;left:553.5px;top:135.8px;width:38.0px;height:15.8px;background:#e0e0e0;"></div>
<div style="position:absolute;left:553.5px;top:139.8px;width:38px;font-size:10.5px;line-height:10.5px;white-space:nowrap;font-family:'Liberation Sans', sans-serif;text-align:center;color:#111;">0.0</div>
<div style="position:absolute;left:550.6px;top:72.2px;width:43.4px;height:23.6px;background:#9c9c9c;border-bottom:1px solid #e0e0e0;border-right:1px solid #e0e0e0;box-sizing:border-box;"></div>
<div style="position:absolute;left:552.3px;top:74.2px;width:40.0px;height:20.6px;background:radial-gradient(ellipse 65% 60% at 25% 20%, #c08080 0%, #8a2a22 30%, #6a1610 60%, #520c08 100%);"></div>
<div style="position:absolute;left:552.3px;top:80.1px;width:40.0px;font-size:11px;line-height:11px;white-space:nowrap;font-family:'Liberation Sans', sans-serif;text-align:center;color:#120000;-webkit-text-stroke:0.25px #120000;">MISS</div>
<div style="position:absolute;left:597.4px;top:45.3px;width:41.0px;height:18.8px;background:#9c9c9c;border-right:1px solid #d0d0d0;border-bottom:1px solid #d0d0d0;box-sizing:border-box;"></div>
<div style="position:absolute;left:598.9px;top:46.8px;width:38.0px;height:15.8px;background:#ffffff;"></div>
<div style="position:absolute;left:598.9px;top:50.8px;width:38px;font-size:10.5px;line-height:10.5px;white-space:nowrap;font-family:'Liberation Sans', sans-serif;text-align:center;color:#111;">2.305</div>
<div style="position:absolute;left:597.4px;top:100.8px;width:41.0px;height:19.3px;background:#9c9c9c;border-right:1px solid #d0d0d0;border-bottom:1px solid #d0d0d0;box-sizing:border-box;"></div>
<div style="position:absolute;left:598.9px;top:102.3px;width:38.0px;height:16.3px;background:#e0e0e0;"></div>
<div style="position:absolute;left:598.9px;top:106.6px;width:38px;font-size:10.5px;line-height:10.5px;white-space:nowrap;font-family:'Liberation Sans', sans-serif;text-align:center;color:#111;">119.4</div>
<div style="position:absolute;left:597.4px;top:134.3px;width:41.0px;height:18.8px;background:#9c9c9c;border-right:1px solid #d0d0d0;border-bottom:1px solid #d0d0d0;box-sizing:border-box;"></div>
<div style="position:absolute;left:598.9px;top:135.8px;width:38.0px;height:15.8px;background:#e0e0e0;"></div>
<div style="position:absolute;left:598.9px;top:139.8px;width:38px;font-size:10.5px;line-height:10.5px;white-space:nowrap;font-family:'Liberation Sans', sans-serif;text-align:center;color:#111;">142.0</div>
<div style="position:absolute;left:595.9px;top:72.2px;width:43.4px;height:23.6px;background:#9c9c9c;border-bottom:1px solid #e0e0e0;border-right:1px solid #e0e0e0;box-sizing:border-box;"></div>
<div style="position:absolute;left:597.6px;top:74.2px;width:40.0px;height:20.6px;background:radial-gradient(ellipse 60% 55% at 25% 20%, #ff9a9a 0%, #ff1c1c 35%, #f00000 70%, #d00000 100%);"></div>
<div style="position:absolute;left:597.6px;top:80.1px;width:40.0px;font-size:11px;line-height:11px;white-space:nowrap;font-family:'Liberation Sans', sans-serif;text-align:center;color:#200000;-webkit-text-stroke:0.25px #200000;">MISS</div>
<div style="position:absolute;left:642.7px;top:45.3px;width:41.0px;height:18.8px;background:#9c9c9c;border-right:1px solid #d0d0d0;border-bottom:1px solid #d0d0d0;box-sizing:border-box;"></div>
<div style="position:absolute;left:644.2px;top:46.8px;width:38.0px;height:15.8px;background:#d4d4d4;"></div>
<div style="position:absolute;left:644.2px;top:50.8px;width:38px;font-size:10.5px;line-height:10.5px;white-space:nowrap;font-family:'Liberation Sans', sans-serif;text-align:center;color:#6a6a6a;">0.000</div>
<div style="position:absolute;left:642.7px;top:100.8px;width:41.0px;height:19.3px;background:#9c9c9c;border-right:1px solid #d0d0d0;border-bottom:1px solid #d0d0d0;box-sizing:border-box;"></div>
<div style="position:absolute;left:644.2px;top:102.3px;width:38.0px;height:16.3px;background:#d4d4d4;"></div>
<div style="position:absolute;left:644.2px;top:106.6px;width:38px;font-size:10.5px;line-height:10.5px;white-space:nowrap;font-family:'Liberation Sans', sans-serif;text-align:center;color:#6a6a6a;">0.0</div>
<div style="position:absolute;left:642.7px;top:134.3px;width:41.0px;height:18.8px;background:#9c9c9c;border-right:1px solid #d0d0d0;border-bottom:1px solid #d0d0d0;box-sizing:border-box;"></div>
<div style="position:absolute;left:644.2px;top:135.8px;width:38.0px;height:15.8px;background:#d4d4d4;"></div>
<div style="position:absolute;left:644.2px;top:139.8px;width:38px;font-size:10.5px;line-height:10.5px;white-space:nowrap;font-family:'Liberation Sans', sans-serif;text-align:center;color:#6a6a6a;">0.0</div>
<div style="position:absolute;left:641.3px;top:72.2px;width:43.4px;height:23.6px;background:#9c9c9c;border-bottom:1px solid #e0e0e0;border-right:1px solid #e0e0e0;box-sizing:border-box;"></div>
<div style="position:absolute;left:643.0px;top:74.2px;width:40.0px;height:20.6px;background:radial-gradient(ellipse 60% 55% at 25% 20%, #b89090 0%, #a07474 40%, #966a6a 100%);"></div>
<div style="position:absolute;left:643.0px;top:80.1px;width:40.0px;font-size:11px;line-height:11px;white-space:nowrap;font-family:'Liberation Sans', sans-serif;text-align:center;color:#8a6262;">MISS</div>
<div style="position:absolute;left:688.1px;top:45.3px;width:41.0px;height:18.8px;background:#9c9c9c;border-right:1px solid #d0d0d0;border-bottom:1px solid #d0d0d0;box-sizing:border-box;"></div>
<div style="position:absolute;left:689.6px;top:46.8px;width:38.0px;height:15.8px;background:#d4d4d4;"></div>
<div style="position:absolute;left:689.6px;top:50.8px;width:38px;font-size:10.5px;line-height:10.5px;white-space:nowrap;font-family:'Liberation Sans', sans-serif;text-align:center;color:#6a6a6a;">0.000</div>
<div style="position:absolute;left:688.1px;top:100.8px;width:41.0px;height:19.3px;background:#9c9c9c;border-right:1px solid #d0d0d0;border-bottom:1px solid #d0d0d0;box-sizing:border-box;"></div>
<div style="position:absolute;left:689.6px;top:102.3px;width:38.0px;height:16.3px;background:#d4d4d4;"></div>
<div style="position:absolute;left:689.6px;top:106.6px;width:38px;font-size:10.5px;line-height:10.5px;white-space:nowrap;font-family:'Liberation Sans', sans-serif;text-align:center;color:#6a6a6a;">0.0</div>
<div style="position:absolute;left:688.1px;top:134.3px;width:41.0px;height:18.8px;background:#9c9c9c;border-right:1px solid #d0d0d0;border-bottom:1px solid #d0d0d0;box-sizing:border-box;"></div>
<div style="position:absolute;left:689.6px;top:135.8px;width:38.0px;height:15.8px;background:#d4d4d4;"></div>
<div style="position:absolute;left:689.6px;top:139.8px;width:38px;font-size:10.5px;line-height:10.5px;white-space:nowrap;font-family:'Liberation Sans', sans-serif;text-align:center;color:#6a6a6a;">0.0</div>
<div style="position:absolute;left:686.7px;top:72.2px;width:43.4px;height:23.6px;background:#9c9c9c;border-bottom:1px solid #e0e0e0;border-right:1px solid #e0e0e0;box-sizing:border-box;"></div>
<div style="position:absolute;left:688.4px;top:74.2px;width:40.0px;height:20.6px;background:radial-gradient(ellipse 60% 55% at 25% 20%, #b89090 0%, #a07474 40%, #966a6a 100%);"></div>
<div style="position:absolute;left:688.4px;top:80.1px;width:40.0px;font-size:11px;line-height:11px;white-space:nowrap;font-family:'Liberation Sans', sans-serif;text-align:center;color:#8a6262;">MISS</div>
<div style="position:absolute;left:733.5px;top:45.3px;width:41.0px;height:18.8px;background:#9c9c9c;border-right:1px solid #d0d0d0;border-bottom:1px solid #d0d0d0;box-sizing:border-box;"></div>
<div style="position:absolute;left:735.0px;top:46.8px;width:38.0px;height:15.8px;background:#d4d4d4;"></div>
<div style="position:absolute;left:735.0px;top:50.8px;width:38px;font-size:10.5px;line-height:10.5px;white-space:nowrap;font-family:'Liberation Sans', sans-serif;text-align:center;color:#6a6a6a;">0.000</div>
<div style="position:absolute;left:733.5px;top:100.8px;width:41.0px;height:19.3px;background:#9c9c9c;border-right:1px solid #d0d0d0;border-bottom:1px solid #d0d0d0;box-sizing:border-box;"></div>
<div style="position:absolute;left:735.0px;top:102.3px;width:38.0px;height:16.3px;background:#d4d4d4;"></div>
<div style="position:absolute;left:735.0px;top:106.6px;width:38px;font-size:10.5px;line-height:10.5px;white-space:nowrap;font-family:'Liberation Sans', sans-serif;text-align:center;color:#6a6a6a;">0.0</div>
<div style="position:absolute;left:733.5px;top:134.3px;width:41.0px;height:18.8px;background:#9c9c9c;border-right:1px solid #d0d0d0;border-bottom:1px solid #d0d0d0;box-sizing:border-box;"></div>
<div style="position:absolute;left:735.0px;top:135.8px;width:38.0px;height:15.8px;background:#d4d4d4;"></div>
<div style="position:absolute;left:735.0px;top:139.8px;width:38px;font-size:10.5px;line-height:10.5px;white-space:nowrap;font-family:'Liberation Sans', sans-serif;text-align:center;color:#6a6a6a;">0.0</div>
<div style="position:absolute;left:732.1px;top:72.2px;width:43.4px;height:23.6px;background:#9c9c9c;border-bottom:1px solid #e0e0e0;border-right:1px solid #e0e0e0;box-sizing:border-box;"></div>
<div style="position:absolute;left:733.8px;top:74.2px;width:40.0px;height:20.6px;background:radial-gradient(ellipse 60% 55% at 25% 20%, #b89090 0%, #a07474 40%, #966a6a 100%);"></div>
<div style="position:absolute;left:733.8px;top:80.1px;width:40.0px;font-size:11px;line-height:11px;white-space:nowrap;font-family:'Liberation Sans', sans-serif;text-align:center;color:#8a6262;">MISS</div>
<div style="position:absolute;left:778.8px;top:45.3px;width:41.0px;height:18.8px;background:#9c9c9c;border-right:1px solid #d0d0d0;border-bottom:1px solid #d0d0d0;box-sizing:border-box;"></div>
<div style="position:absolute;left:780.3px;top:46.8px;width:38.0px;height:15.8px;background:#d4d4d4;"></div>
<div style="position:absolute;left:780.3px;top:50.8px;width:38px;font-size:10.5px;line-height:10.5px;white-space:nowrap;font-family:'Liberation Sans', sans-serif;text-align:center;color:#6a6a6a;">0.000</div>
<div style="position:absolute;left:778.8px;top:100.8px;width:41.0px;height:19.3px;background:#9c9c9c;border-right:1px solid #d0d0d0;border-bottom:1px solid #d0d0d0;box-sizing:border-box;"></div>
<div style="position:absolute;left:780.3px;top:102.3px;width:38.0px;height:16.3px;background:#d4d4d4;"></div>
<div style="position:absolute;left:780.3px;top:106.6px;width:38px;font-size:10.5px;line-height:10.5px;white-space:nowrap;font-family:'Liberation Sans', sans-serif;text-align:center;color:#6a6a6a;">0.0</div>
<div style="position:absolute;left:778.8px;top:134.3px;width:41.0px;height:18.8px;background:#9c9c9c;border-right:1px solid #d0d0d0;border-bottom:1px solid #d0d0d0;box-sizing:border-box;"></div>
<div style="position:absolute;left:780.3px;top:135.8px;width:38.0px;height:15.8px;background:#d4d4d4;"></div>
<div style="position:absolute;left:780.3px;top:139.8px;width:38px;font-size:10.5px;line-height:10.5px;white-space:nowrap;font-family:'Liberation Sans', sans-serif;text-align:center;color:#6a6a6a;">0.0</div>
<div style="position:absolute;left:777.4px;top:72.2px;width:43.4px;height:23.6px;background:#9c9c9c;border-bottom:1px solid #e0e0e0;border-right:1px solid #e0e0e0;box-sizing:border-box;"></div>
<div style="position:absolute;left:779.1px;top:74.2px;width:40.0px;height:20.6px;background:radial-gradient(ellipse 60% 55% at 25% 20%, #b89090 0%, #a07474 40%, #966a6a 100%);"></div>
<div style="position:absolute;left:779.1px;top:80.1px;width:40.0px;font-size:11px;line-height:11px;white-space:nowrap;font-family:'Liberation Sans', sans-serif;text-align:center;color:#8a6262;">MISS</div>
<div style="position:absolute;left:824.2px;top:45.3px;width:41.0px;height:18.8px;background:#9c9c9c;border-right:1px solid #d0d0d0;border-bottom:1px solid #d0d0d0;box-sizing:border-box;"></div>
<div style="position:absolute;left:825.7px;top:46.8px;width:38.0px;height:15.8px;background:#d4d4d4;"></div>
<div style="position:absolute;left:825.7px;top:50.8px;width:38px;font-size:10.5px;line-height:10.5px;white-space:nowrap;font-family:'Liberation Sans', sans-serif;text-align:center;color:#6a6a6a;">0.000</div>
<div style="position:absolute;left:824.2px;top:100.8px;width:41.0px;height:19.3px;background:#9c9c9c;border-right:1px solid #d0d0d0;border-bottom:1px solid #d0d0d0;box-sizing:border-box;"></div>
<div style="position:absolute;left:825.7px;top:102.3px;width:38.0px;height:16.3px;background:#d4d4d4;"></div>
<div style="position:absolute;left:825.7px;top:106.6px;width:38px;font-size:10.5px;line-height:10.5px;white-space:nowrap;font-family:'Liberation Sans', sans-serif;text-align:center;color:#6a6a6a;">0.0</div>
<div style="position:absolute;left:824.2px;top:134.3px;width:41.0px;height:18.8px;background:#9c9c9c;border-right:1px solid #d0d0d0;border-bottom:1px solid #d0d0d0;box-sizing:border-box;"></div>
<div style="position:absolute;left:825.7px;top:135.8px;width:38.0px;height:15.8px;background:#d4d4d4;"></div>
<div style="position:absolute;left:825.7px;top:139.8px;width:38px;font-size:10.5px;line-height:10.5px;white-space:nowrap;font-family:'Liberation Sans', sans-serif;text-align:center;color:#6a6a6a;">0.0</div>
<div style="position:absolute;left:822.8px;top:72.2px;width:43.4px;height:23.6px;background:#9c9c9c;border-bottom:1px solid #e0e0e0;border-right:1px solid #e0e0e0;box-sizing:border-box;"></div>
<div style="position:absolute;left:824.5px;top:74.2px;width:40.0px;height:20.6px;background:radial-gradient(ellipse 60% 55% at 25% 20%, #b89090 0%, #a07474 40%, #966a6a 100%);"></div>
<div style="position:absolute;left:824.5px;top:80.1px;width:40.0px;font-size:11px;line-height:11px;white-space:nowrap;font-family:'Liberation Sans', sans-serif;text-align:center;color:#8a6262;">MISS</div>
<div style="position:absolute;left:869.6px;top:45.3px;width:41.0px;height:18.8px;background:#9c9c9c;border-right:1px solid #d0d0d0;border-bottom:1px solid #d0d0d0;box-sizing:border-box;"></div>
<div style="position:absolute;left:871.1px;top:46.8px;width:38.0px;height:15.8px;background:#d4d4d4;"></div>
<div style="position:absolute;left:871.1px;top:50.8px;width:38px;font-size:10.5px;line-height:10.5px;white-space:nowrap;font-family:'Liberation Sans', sans-serif;text-align:center;color:#6a6a6a;">0.000</div>
<div style="position:absolute;left:869.6px;top:100.8px;width:41.0px;height:19.3px;background:#9c9c9c;border-right:1px solid #d0d0d0;border-bottom:1px solid #d0d0d0;box-sizing:border-box;"></div>
<div style="position:absolute;left:871.1px;top:102.3px;width:38.0px;height:16.3px;background:#d4d4d4;"></div>
<div style="position:absolute;left:871.1px;top:106.6px;width:38px;font-size:10.5px;line-height:10.5px;white-space:nowrap;font-family:'Liberation Sans', sans-serif;text-align:center;color:#6a6a6a;">0.0</div>
<div style="position:absolute;left:869.6px;top:134.3px;width:41.0px;height:18.8px;background:#9c9c9c;border-right:1px solid #d0d0d0;border-bottom:1px solid #d0d0d0;box-sizing:border-box;"></div>
<div style="position:absolute;left:871.1px;top:135.8px;width:38.0px;height:15.8px;background:#d4d4d4;"></div>
<div style="position:absolute;left:871.1px;top:139.8px;width:38px;font-size:10.5px;line-height:10.5px;white-space:nowrap;font-family:'Liberation Sans', sans-serif;text-align:center;color:#6a6a6a;">0.0</div>
<div style="position:absolute;left:868.2px;top:72.2px;width:43.4px;height:23.6px;background:#9c9c9c;border-bottom:1px solid #e0e0e0;border-right:1px solid #e0e0e0;box-sizing:border-box;"></div>
<div style="position:absolute;left:869.9px;top:74.2px;width:40.0px;height:20.6px;background:radial-gradient(ellipse 60% 55% at 25% 20%, #b89090 0%, #a07474 40%, #966a6a 100%);"></div>
<div style="position:absolute;left:869.9px;top:80.1px;width:40.0px;font-size:11px;line-height:11px;white-space:nowrap;font-family:'Liberation Sans', sans-serif;text-align:center;color:#8a6262;">MISS</div>
<div style="position:absolute;right:661.8px;top:181.8px;font-size:12.4px;line-height:12.4px;white-space:nowrap;font-family:'Liberation Sans', sans-serif;text-align:right;">Misfires</div>
<div style="position:absolute;right:661.8px;top:209.8px;font-size:12.4px;line-height:12.4px;white-space:nowrap;font-family:'Liberation Sans', sans-serif;text-align:right;">Misfire%</div>
<div style="position:absolute;right:661.0px;top:238.2px;font-size:12.4px;line-height:12.4px;white-space:nowrap;font-family:'Liberation Sans', sans-serif;text-align:right;">Cylinder#</div>
<div style="position:absolute;left:321.6px;top:173.7px;width:43.4px;height:24.9px;background:#9e9e9e;border-right:1px solid #d8d8d8;border-bottom:1px solid #d8d8d8;box-sizing:border-box;"></div>
<div style="position:absolute;left:324.4px;top:176.8px;width:38.2px;height:20.6px;background:#74f400;"></div>
<div style="position:absolute;left:324.1px;top:179.2px;width:38px;font-size:14.5px;line-height:14.5px;white-space:nowrap;font-family:'Liberation Sans', sans-serif;text-align:center;">0</div>
<div style="position:absolute;left:321.6px;top:202.0px;width:43.4px;height:25.0px;background:#9e9e9e;border-right:1px solid #d8d8d8;border-bottom:1px solid #d8d8d8;box-sizing:border-box;"></div>
<div style="position:absolute;left:324.4px;top:205.3px;width:38.2px;height:20.5px;background:#74f400;"></div>
<div style="position:absolute;left:324.1px;top:207.7px;width:38px;font-size:14.5px;line-height:14.5px;white-space:nowrap;font-family:'Liberation Sans', sans-serif;text-align:center;">0</div>
<div style="position:absolute;left:321.6px;top:230.5px;width:43.4px;height:24.9px;background:#9e9e9e;border-right:1px solid #d8d8d8;border-bottom:1px solid #d8d8d8;box-sizing:border-box;"></div>
<div style="position:absolute;left:324.4px;top:233.2px;width:38.2px;height:21.0px;background:#fff;"></div>
<div style="position:absolute;left:324.1px;top:236.2px;width:38px;font-size:13.8px;line-height:13.8px;white-space:nowrap;font-family:'Liberation Sans', sans-serif;text-align:center;">1</div>
<div style="position:absolute;left:427.9px;top:173.7px;width:43.4px;height:24.9px;background:#9e9e9e;border-right:1px solid #d8d8d8;border-bottom:1px solid #d8d8d8;box-sizing:border-box;"></div>
<div style="position:absolute;left:430.7px;top:176.8px;width:38.2px;height:20.6px;background:#74f400;"></div>
<div style="position:absolute;left:430.4px;top:179.2px;width:38px;font-size:14.5px;line-height:14.5px;white-space:nowrap;font-family:'Liberation Sans', sans-serif;text-align:center;">0</div>
<div style="position:absolute;left:427.9px;top:202.0px;width:43.4px;height:25.0px;background:#9e9e9e;border-right:1px solid #d8d8d8;border-bottom:1px solid #d8d8d8;box-sizing:border-box;"></div>
<div style="position:absolute;left:430.7px;top:205.3px;width:38.2px;height:20.5px;background:#74f400;"></div>
<div style="position:absolute;left:430.4px;top:207.7px;width:38px;font-size:14.5px;line-height:14.5px;white-space:nowrap;font-family:'Liberation Sans', sans-serif;text-align:center;">0</div>
<div style="position:absolute;left:427.9px;top:230.5px;width:43.4px;height:24.9px;background:#9e9e9e;border-right:1px solid #d8d8d8;border-bottom:1px solid #d8d8d8;box-sizing:border-box;"></div>
<div style="position:absolute;left:430.7px;top:233.2px;width:38.2px;height:21.0px;background:#fff;"></div>
<div style="position:absolute;left:430.4px;top:236.2px;width:38px;font-size:13.8px;line-height:13.8px;white-space:nowrap;font-family:'Liberation Sans', sans-serif;text-align:center;">5</div>
<div style="position:absolute;left:534.1px;top:173.7px;width:43.4px;height:24.9px;background:#9e9e9e;border-right:1px solid #d8d8d8;border-bottom:1px solid #d8d8d8;box-sizing:border-box;"></div>
<div style="position:absolute;left:536.9px;top:176.8px;width:38.2px;height:20.6px;background:#74f400;"></div>
<div style="position:absolute;left:536.6px;top:179.2px;width:38px;font-size:14.5px;line-height:14.5px;white-space:nowrap;font-family:'Liberation Sans', sans-serif;text-align:center;">0</div>
<div style="position:absolute;left:534.1px;top:202.0px;width:43.4px;height:25.0px;background:#9e9e9e;border-right:1px solid #d8d8d8;border-bottom:1px solid #d8d8d8;box-sizing:border-box;"></div>
<div style="position:absolute;left:536.9px;top:205.3px;width:38.2px;height:20.5px;background:#74f400;"></div>
<div style="position:absolute;left:536.6px;top:207.7px;width:38px;font-size:14.5px;line-height:14.5px;white-space:nowrap;font-family:'Liberation Sans', sans-serif;text-align:center;">0</div>
<div style="position:absolute;left:534.1px;top:230.5px;width:43.4px;height:24.9px;background:#9e9e9e;border-right:1px solid #d8d8d8;border-bottom:1px solid #d8d8d8;box-sizing:border-box;"></div>
<div style="position:absolute;left:536.9px;top:233.2px;width:38.2px;height:21.0px;background:#fff;"></div>
<div style="position:absolute;left:536.6px;top:236.2px;width:38px;font-size:13.8px;line-height:13.8px;white-space:nowrap;font-family:'Liberation Sans', sans-serif;text-align:center;">3</div>
<div style="position:absolute;left:640.4px;top:173.7px;width:43.4px;height:24.9px;background:#9e9e9e;border-right:1px solid #d8d8d8;border-bottom:1px solid #d8d8d8;box-sizing:border-box;"></div>
<div style="position:absolute;left:643.2px;top:176.8px;width:38.2px;height:20.6px;background:#74f400;"></div>
<div style="position:absolute;left:642.9px;top:179.2px;width:38px;font-size:14.5px;line-height:14.5px;white-space:nowrap;font-family:'Liberation Sans', sans-serif;text-align:center;">0</div>
<div style="position:absolute;left:640.4px;top:202.0px;width:43.4px;height:25.0px;background:#9e9e9e;border-right:1px solid #d8d8d8;border-bottom:1px solid #d8d8d8;box-sizing:border-box;"></div>
<div style="position:absolute;left:643.2px;top:205.3px;width:38.2px;height:20.5px;background:#74f400;"></div>
<div style="position:absolute;left:642.9px;top:207.7px;width:38px;font-size:14.5px;line-height:14.5px;white-space:nowrap;font-family:'Liberation Sans', sans-serif;text-align:center;">0</div>
<div style="position:absolute;left:640.4px;top:230.5px;width:43.4px;height:24.9px;background:#9e9e9e;border-right:1px solid #d8d8d8;border-bottom:1px solid #d8d8d8;box-sizing:border-box;"></div>
<div style="position:absolute;left:643.2px;top:233.2px;width:38.2px;height:21.0px;background:#fff;"></div>
<div style="position:absolute;left:642.9px;top:236.2px;width:38px;font-size:13.8px;line-height:13.8px;white-space:nowrap;font-family:'Liberation Sans', sans-serif;text-align:center;">6</div>
<div style="position:absolute;left:746.6px;top:173.7px;width:43.4px;height:24.9px;background:#9e9e9e;border-right:1px solid #d8d8d8;border-bottom:1px solid #d8d8d8;box-sizing:border-box;"></div>
<div style="position:absolute;left:749.4px;top:176.8px;width:38.2px;height:20.6px;background:#74f400;"></div>
<div style="position:absolute;left:749.1px;top:179.2px;width:38px;font-size:14.5px;line-height:14.5px;white-space:nowrap;font-family:'Liberation Sans', sans-serif;text-align:center;">0</div>
<div style="position:absolute;left:746.6px;top:202.0px;width:43.4px;height:25.0px;background:#9e9e9e;border-right:1px solid #d8d8d8;border-bottom:1px solid #d8d8d8;box-sizing:border-box;"></div>
<div style="position:absolute;left:749.4px;top:205.3px;width:38.2px;height:20.5px;background:#74f400;"></div>
<div style="position:absolute;left:749.1px;top:207.7px;width:38px;font-size:14.5px;line-height:14.5px;white-space:nowrap;font-family:'Liberation Sans', sans-serif;text-align:center;">0</div>
<div style="position:absolute;left:746.6px;top:230.5px;width:43.4px;height:24.9px;background:#9e9e9e;border-right:1px solid #d8d8d8;border-bottom:1px solid #d8d8d8;box-sizing:border-box;"></div>
<div style="position:absolute;left:749.4px;top:233.2px;width:38.2px;height:21.0px;background:#fff;"></div>
<div style="position:absolute;left:749.1px;top:236.2px;width:38px;font-size:13.8px;line-height:13.8px;white-space:nowrap;font-family:'Liberation Sans', sans-serif;text-align:center;">2</div>
<div style="position:absolute;left:852.9px;top:173.7px;width:43.4px;height:24.9px;background:#9e9e9e;border-right:1px solid #d8d8d8;border-bottom:1px solid #d8d8d8;box-sizing:border-box;"></div>
<div style="position:absolute;left:855.7px;top:176.8px;width:38.2px;height:20.6px;background:#ff0000;"></div>
<div style="position:absolute;left:855.4px;top:178.8px;width:38px;font-size:15.5px;line-height:15.5px;white-space:nowrap;font-family:'Liberation Sans', sans-serif;text-align:center;">418</div>
<div style="position:absolute;left:852.9px;top:202.0px;width:43.4px;height:25.0px;background:#9e9e9e;border-right:1px solid #d8d8d8;border-bottom:1px solid #d8d8d8;box-sizing:border-box;"></div>
<div style="position:absolute;left:855.7px;top:205.3px;width:38.2px;height:20.5px;background:#ff0000;"></div>
<div style="position:absolute;left:855.4px;top:207.2px;width:38px;font-size:15.5px;line-height:15.5px;white-space:nowrap;font-family:'Liberation Sans', sans-serif;text-align:center;">100</div>
<div style="position:absolute;left:852.9px;top:230.5px;width:43.4px;height:24.9px;background:#9e9e9e;border-right:1px solid #d8d8d8;border-bottom:1px solid #d8d8d8;box-sizing:border-box;"></div>
<div style="position:absolute;left:855.7px;top:233.2px;width:38.2px;height:21.0px;background:#fff;"></div>
<div style="position:absolute;left:855.4px;top:236.2px;width:38px;font-size:13.8px;line-height:13.8px;white-space:nowrap;font-family:'Liberation Sans', sans-serif;text-align:center;">4</div>
<div style="position:absolute;left:288.7px;top:262.3px;width:641.8px;height:315.7px;background:#e8e8e8;border-left:1px solid #b8b8b8;border-top:1px solid #b8b8b8;box-sizing:border-box;"></div>
<svg style="position:absolute;left:291.8px;top:264.5px" width="636.2" height="311.1" viewBox="291.8 264.5 636.2 311.1"><rect x="291.8" y="264.5" width="636.2" height="311.1" fill="#000"/><path d="M297.9 264.5V575.6 M305.3 264.5V575.6 M312.7 264.5V575.6 M320.1 264.5V575.6 M327.5 264.5V575.6 M334.9 264.5V575.6 M342.3 264.5V575.6 M349.7 264.5V575.6 M357.0 264.5V575.6 M371.8 264.5V575.6 M379.2 264.5V575.6 M386.6 264.5V575.6 M394.0 264.5V575.6 M401.4 264.5V575.6 M408.8 264.5V575.6 M416.2 264.5V575.6 M423.6 264.5V575.6 M431.0 264.5V575.6 M445.8 264.5V575.6 M453.2 264.5V575.6 M460.6 264.5V575.6 M468.0 264.5V575.6 M475.4 264.5V575.6 M482.7 264.5V575.6 M490.1 264.5V575.6 M497.5 264.5V575.6 M504.9 264.5V575.6 M519.7 264.5V575.6 M527.1 264.5V575.6 M534.5 264.5V575.6 M541.9 264.5V575.6 M549.3 264.5V575.6 M556.7 264.5V575.6 M564.1 264.5V575.6 M571.5 264.5V575.6 M578.9 264.5V575.6 M593.7 264.5V575.6 M601.0 264.5V575.6 M608.4 264.5V575.6 M615.8 264.5V575.6 M623.2 264.5V575.6 M630.6 264.5V575.6 M638.0 264.5V575.6 M645.4 264.5V575.6 M652.8 264.5V575.6 M667.6 264.5V575.6 M675.0 264.5V575.6 M682.4 264.5V575.6 M689.8 264.5V575.6 M697.2 264.5V575.6 M704.6 264.5V575.6 M712.0 264.5V575.6 M719.4 264.5V575.6 M726.7 264.5V575.6 M741.5 264.5V575.6 M748.9 264.5V575.6 M756.3 264.5V575.6 M763.7 264.5V575.6 M771.1 264.5V575.6 M778.5 264.5V575.6 M785.9 264.5V575.6 M793.3 264.5V575.6 M800.7 264.5V575.6 M815.5 264.5V575.6 M822.9 264.5V575.6 M830.3 264.5V575.6 M837.7 264.5V575.6 M845.0 264.5V575.6 M852.4 264.5V575.6 M859.8 264.5V575.6 M867.2 264.5V575.6 M874.6 264.5V575.6 M889.4 264.5V575.6 M896.8 264.5V575.6 M904.2 264.5V575.6 M911.6 264.5V575.6 M919.0 264.5V575.6 M926.4 264.5V575.6 M291.8 264.7H928 M291.8 276.5H928 M291.8 282.4H928 M291.8 288.3H928 M291.8 300.1H928 M291.8 306.0H928 M291.8 311.9H928 M291.8 323.7H928 M291.8 329.6H928 M291.8 335.5H928 M291.8 347.3H928 M291.8 353.2H928 M291.8 359.1H928 M291.8 370.9H928 M291.8 376.9H928 M291.8 382.8H928 M291.8 394.6H928 M291.8 400.5H928 M291.8 406.4H928 M291.8 418.2H928 M291.8 424.1H928 M291.8 430.0H928 M291.8 441.8H928 M291.8 447.7H928 M291.8 453.6H928 M291.8 465.4H928 M291.8 471.3H928 M291.8 477.2H928 M291.8 489.0H928 M291.8 495.0H928 M291.8 500.9H928 M291.8 512.7H928 M291.8 518.6H928 M291.8 524.5H928 M291.8 536.3H928 M291.8 542.2H928 M291.8 548.1H928 M291.8 559.9H928 M291.8 565.8H928 M291.8 571.7H928" stroke="#1a281a" stroke-width="1" fill="none"/><path d="M364.4 264.5V575.6 M438.4 264.5V575.6 M512.3 264.5V575.6 M586.3 264.5V575.6 M660.2 264.5V575.6 M734.1 264.5V575.6 M808.1 264.5V575.6 M882.0 264.5V575.6 M291.8 270.6H928 M291.8 294.2H928 M291.8 317.8H928 M291.8 341.4H928 M291.8 365.0H928 M291.8 388.7H928 M291.8 412.3H928 M291.8 435.9H928 M291.8 459.5H928 M291.8 483.1H928 M291.8 506.8H928 M291.8 530.4H928 M291.8 554.0H928" stroke="#235823" stroke-width="1" fill="none"/><path d="M397.2 264.5V575.6" stroke="#ffffff" stroke-width="2.2"/><path d="M503.6 264.5V575.6" stroke="#ffffff" stroke-width="2.2"/><path d="M610.1 264.5V575.6" stroke="#ffffff" stroke-width="2.2"/><path d="M716.5 264.5V575.6" stroke="#ffffff" stroke-width="2.2"/><path d="M823.0 264.5V575.6" stroke="#ffffff" stroke-width="2.2"/><path d="M291.30 267.60 C292.00 267.08 293.38 264.92 295.50 264.50 C297.62 264.08 301.88 264.52 304.00 265.10 C306.12 265.68 306.10 267.15 308.20 268.00 C310.30 268.85 313.80 269.20 316.60 270.20 C319.40 271.20 321.85 272.32 325.00 274.00 C328.15 275.68 332.33 278.55 335.50 280.30 C338.67 282.05 340.83 283.63 344.00 284.50 C347.17 285.37 351.00 285.22 354.50 285.50 C358.00 285.78 361.85 285.92 365.00 286.20 C368.15 286.48 370.60 286.72 373.40 287.20 C376.20 287.68 378.98 288.50 381.80 289.10 C384.62 289.70 387.67 290.17 390.30 290.80 C392.93 291.43 394.80 292.03 397.60 292.90 C400.40 293.77 403.77 294.77 407.10 296.00 C410.43 297.23 414.45 298.88 417.60 300.30 C420.75 301.72 422.48 303.17 426.00 304.50 C429.52 305.83 434.83 307.43 438.70 308.30 C442.57 309.17 446.05 309.28 449.20 309.70 C452.35 310.12 454.80 309.92 457.60 310.80 C460.40 311.68 463.18 313.53 466.00 315.00 C468.82 316.47 471.90 318.62 474.50 319.60 C477.10 320.58 479.37 321.50 481.60 320.90 C483.83 320.30 485.62 317.68 487.90 316.00 C490.18 314.32 492.67 311.92 495.30 310.80 C497.93 309.68 499.50 309.65 503.70 309.30 C507.90 308.95 516.65 309.22 520.50 308.70 C524.35 308.18 524.68 306.90 526.80 306.20 C528.92 305.50 531.27 304.43 533.20 304.50 C535.13 304.57 536.65 305.20 538.40 306.60 C540.15 308.00 541.42 310.27 543.70 312.90 C545.98 315.53 549.65 319.95 552.10 322.40 C554.55 324.85 555.95 326.38 558.40 327.60 C560.85 328.82 564.33 329.52 566.80 329.70 C569.27 329.88 571.08 329.92 573.20 328.70 C575.32 327.48 576.70 325.57 579.50 322.40 C582.30 319.23 586.50 314.10 590.00 309.70 C593.50 305.30 597.17 300.90 600.50 296.00 C603.83 291.10 606.83 284.15 610.00 280.30 C613.17 276.45 616.52 274.83 619.50 272.90 C622.48 270.97 625.45 268.88 627.90 268.70 C630.35 268.52 631.75 270.15 634.20 271.80 C636.65 273.45 639.80 276.57 642.60 278.60 C645.40 280.63 647.83 281.80 651.00 284.00 C654.17 286.20 658.70 290.03 661.60 291.80 C664.50 293.57 665.50 293.62 668.40 294.60 C671.30 295.58 676.18 297.28 679.00 297.70 C681.82 298.12 682.85 297.72 685.30 297.10 C687.75 296.48 690.90 295.12 693.70 294.00 C696.50 292.88 699.65 291.35 702.10 290.40 C704.55 289.45 705.95 288.52 708.40 288.30 C710.85 288.08 714.33 288.68 716.80 289.10 C719.27 289.52 720.73 290.93 723.20 290.80 C725.67 290.67 728.45 288.77 731.60 288.30 C734.75 287.83 739.65 287.65 742.10 288.00 C744.55 288.35 744.55 288.95 746.30 290.40 C748.05 291.85 750.13 294.70 752.60 296.70 C755.07 298.70 757.58 301.42 761.10 302.40 C764.62 303.38 771.05 302.68 773.70 302.60 C776.35 302.52 775.28 301.08 777.00 301.90 C778.72 302.72 781.67 304.82 784.00 307.50 C786.33 310.18 788.67 313.92 791.00 318.00 C793.33 322.08 795.67 326.95 798.00 332.00 C800.33 337.05 802.67 342.47 805.00 348.30 C807.33 354.13 809.87 360.77 812.00 367.00 C814.13 373.23 816.05 379.48 817.80 385.70 C819.55 391.92 821.13 398.08 822.50 404.30 C823.87 410.52 825.00 417.22 826.00 423.00 C827.00 428.78 827.22 432.75 828.50 439.00 C829.78 445.25 831.90 452.23 833.70 460.50 C835.50 468.77 837.43 479.25 839.30 488.60 C841.17 497.95 843.03 507.72 844.90 516.60 C846.77 525.48 848.63 534.42 850.50 541.90 C852.37 549.38 854.47 556.37 856.10 561.50 C857.73 566.63 858.90 570.22 860.30 572.70 C861.70 575.18 863.10 576.17 864.50 576.40 C865.90 576.63 867.28 576.12 868.70 574.10 C870.12 572.08 871.35 570.15 873.00 564.30 C874.65 558.45 876.73 547.88 878.60 539.00 C880.47 530.12 882.33 520.82 884.20 511.00 C886.07 501.18 887.93 491.32 889.80 480.10 C891.67 468.88 893.90 455.38 895.40 443.70 C896.90 432.02 897.73 419.33 898.80 410.00 C899.87 400.67 900.42 396.72 901.80 387.70 C903.18 378.68 905.33 366.05 907.10 355.90 C908.87 345.75 910.18 336.95 912.40 326.80 C914.62 316.65 917.75 304.48 920.40 295.00 C923.05 285.52 926.98 274.08 928.30 269.90" stroke="#f4ea00" stroke-width="2.3" fill="none" stroke-linejoin="round" stroke-linecap="round"/></svg>
<div style="position:absolute;right:668.2px;top:260.5px;font-size:9px;line-height:9px;white-space:nowrap;font-family:'Liberation Mono', monospace;text-align:right;color:#2a2a2a;letter-spacing:0.3px;">0.4</div>
<div style="position:absolute;right:668.2px;top:290.6px;font-size:9px;line-height:9px;white-space:nowrap;font-family:'Liberation Mono', monospace;text-align:right;color:#2a2a2a;letter-spacing:0.3px;">0.2</div>
<div style="position:absolute;right:668.2px;top:314.2px;font-size:9px;line-height:9px;white-space:nowrap;font-family:'Liberation Mono', monospace;text-align:right;color:#2a2a2a;letter-spacing:0.3px;">0.0</div>
<div style="position:absolute;right:668.2px;top:337.8px;font-size:9px;line-height:9px;white-space:nowrap;font-family:'Liberation Mono', monospace;text-align:right;color:#2a2a2a;letter-spacing:0.3px;">-0.2</div>
<div style="position:absolute;right:668.2px;top:361.4px;font-size:9px;line-height:9px;white-space:nowrap;font-family:'Liberation Mono', monospace;text-align:right;color:#2a2a2a;letter-spacing:0.3px;">-0.4</div>
<div style="position:absolute;right:668.2px;top:385.1px;font-size:9px;line-height:9px;white-space:nowrap;font-family:'Liberation Mono', monospace;text-align:right;color:#2a2a2a;letter-spacing:0.3px;">-0.6</div>
<div style="position:absolute;right:668.2px;top:408.7px;font-size:9px;line-height:9px;white-space:nowrap;font-family:'Liberation Mono', monospace;text-align:right;color:#2a2a2a;letter-spacing:0.3px;">-0.8</div>
<div style="position:absolute;right:668.2px;top:432.3px;font-size:9px;line-height:9px;white-space:nowrap;font-family:'Liberation Mono', monospace;text-align:right;color:#2a2a2a;letter-spacing:0.3px;">-1.0</div>
<div style="position:absolute;right:668.2px;top:455.9px;font-size:9px;line-height:9px;white-space:nowrap;font-family:'Liberation Mono', monospace;text-align:right;color:#2a2a2a;letter-spacing:0.3px;">-1.2</div>
<div style="position:absolute;right:668.2px;top:479.5px;font-size:9px;line-height:9px;white-space:nowrap;font-family:'Liberation Mono', monospace;text-align:right;color:#2a2a2a;letter-spacing:0.3px;">-1.4</div>
<div style="position:absolute;right:668.2px;top:503.2px;font-size:9px;line-height:9px;white-space:nowrap;font-family:'Liberation Mono', monospace;text-align:right;color:#2a2a2a;letter-spacing:0.3px;">-1.6</div>
<div style="position:absolute;right:668.2px;top:526.8px;font-size:9px;line-height:9px;white-space:nowrap;font-family:'Liberation Mono', monospace;text-align:right;color:#2a2a2a;letter-spacing:0.3px;">-1.8</div>
<div style="position:absolute;right:668.2px;top:550.4px;font-size:9px;line-height:9px;white-space:nowrap;font-family:'Liberation Mono', monospace;text-align:right;color:#2a2a2a;letter-spacing:0.3px;">-2.0</div>
<div style="position:absolute;right:668.2px;top:574.0px;font-size:9px;line-height:9px;white-space:nowrap;font-family:'Liberation Mono', monospace;text-align:right;color:#2a2a2a;letter-spacing:0.3px;">-2.2</div>
<div style="position:absolute;left:279.6px;top:585.5px;font-size:9.8px;line-height:9.8px;white-space:nowrap;font-family:'Liberation Mono', monospace;color:#2a2a2a;">0.00</div>
<div style="position:absolute;left:334.9px;top:585.5px;width:60px;font-size:9.8px;line-height:9.8px;white-space:nowrap;font-family:'Liberation Mono', monospace;text-align:center;color:#2a2a2a;">20.00m</div>
<div style="position:absolute;left:408.9px;top:585.5px;width:60px;font-size:9.8px;line-height:9.8px;white-space:nowrap;font-family:'Liberation Mono', monospace;text-align:center;color:#2a2a2a;">40.00m</div>
<div style="position:absolute;left:482.8px;top:585.5px;width:60px;font-size:9.8px;line-height:9.8px;white-space:nowrap;font-family:'Liberation Mono', monospace;text-align:center;color:#2a2a2a;">60.00m</div>
<div style="position:absolute;left:556.8px;top:585.5px;width:60px;font-size:9.8px;line-height:9.8px;white-space:nowrap;font-family:'Liberation Mono', monospace;text-align:center;color:#2a2a2a;">80.00m</div>
<div style="position:absolute;left:630.7px;top:585.5px;width:60px;font-size:9.8px;line-height:9.8px;white-space:nowrap;font-family:'Liberation Mono', monospace;text-align:center;color:#2a2a2a;">100.00m</div>
<div style="position:absolute;left:704.6px;top:585.5px;width:60px;font-size:9.8px;line-height:9.8px;white-space:nowrap;font-family:'Liberation Mono', monospace;text-align:center;color:#2a2a2a;">120.00m</div>
<div style="position:absolute;left:778.6px;top:585.5px;width:60px;font-size:9.8px;line-height:9.8px;white-space:nowrap;font-family:'Liberation Mono', monospace;text-align:center;color:#2a2a2a;">140.00m</div>
<div style="position:absolute;left:852.5px;top:585.5px;width:60px;font-size:9.8px;line-height:9.8px;white-space:nowrap;font-family:'Liberation Mono', monospace;text-align:center;color:#2a2a2a;">160.00m</div>
<div style="position:absolute;left:242.6px;top:585.4px;font-size:9.9px;line-height:9.9px;white-space:nowrap;font-family:'Liberation Mono', monospace;color:#2a2a2a;">T(s):</div>
<svg style="position:absolute;left:0;top:0" width="950" height="642"><path d="M283.8 264.1H288.5 M283.8 294.2H288.5 M283.8 317.8H288.5 M283.8 341.4H288.5 M283.8 365.0H288.5 M283.8 388.7H288.5 M283.8 412.3H288.5 M283.8 435.9H288.5 M283.8 459.5H288.5 M283.8 483.1H288.5 M283.8 506.8H288.5 M283.8 530.4H288.5 M283.8 554.0H288.5 M283.8 577.6H288.5 M283.8 269.9H288.5 M290.5 579.5V584 M364.4 579.5V584 M438.4 579.5V584 M512.3 579.5V584 M586.3 579.5V584 M660.2 579.5V584 M734.1 579.5V584 M808.1 579.5V584 M882.0 579.5V584 M929.7 579.5V584" stroke="#333" stroke-width="1.2"/></svg>
<div style="position:absolute;left:241.2px;top:606.6px;font-size:19.6px;line-height:19.6px;white-space:nowrap;font-family:'Liberation Sans', sans-serif;">RPM</div>
<div style="position:absolute;left:288.9px;top:599.4px;width:91.8px;height:36.2px;background:#9e9e9e;border-right:1px solid #dcdcdc;border-bottom:1px solid #dcdcdc;box-sizing:border-box;"></div>
<div style="position:absolute;left:291.4px;top:601.6px;width:87.1px;height:32.7px;background:#74f400;"></div>
<div style="position:absolute;left:294.2px;top:604.6px;width:80px;font-size:26px;line-height:26px;white-space:nowrap;font-family:'Liberation Sans', sans-serif;text-align:center;">694</div>
<div style="position:absolute;left:385.8px;top:598.8px;width:155.2px;height:37.5px;background:#a0a0a0;border-right:1px solid #dcdcdc;border-bottom:1px solid #dcdcdc;box-sizing:border-box;"></div>
<div style="position:absolute;left:388.1px;top:601.1px;width:150.5px;height:33.4px;background:linear-gradient(180deg,#f8f8f8,#f0f0f0);"></div>
<div style="position:absolute;left:618.0px;top:600.0px;width:116.0px;height:33.7px;background:linear-gradient(90deg,#c8c8c8 0%,#dcdcdc 5%,#d6d6d6 50%,#cecece 88%,#a0a0a0 100%);border:1px solid #3c3c3c;box-sizing:border-box;box-shadow:inset 2px 2px 0 #e4e4e4, inset 0 -2px 0 #b0b0b0;"></div>
<div style="position:absolute;left:618.0px;top:609.2px;width:116px;font-size:15.8px;line-height:15.8px;white-space:nowrap;font-family:'Liberation Sans', sans-serif;text-align:center;color:#0a3ce6;font-weight:bold;word-spacing:0px;letter-spacing:0px;">Pause</div>
<div style="position:absolute;left:743.0px;top:600.0px;width:116.0px;height:33.7px;background:linear-gradient(90deg,#c8c8c8 0%,#dcdcdc 5%,#d6d6d6 50%,#cecece 88%,#a0a0a0 100%);border:1px solid #3c3c3c;box-sizing:border-box;box-shadow:inset 2px 2px 0 #e4e4e4, inset 0 -2px 0 #b0b0b0;"></div>
<div style="position:absolute;left:743.0px;top:609.1px;width:116px;font-size:16px;line-height:16px;white-space:nowrap;font-family:'Liberation Sans', sans-serif;text-align:center;color:#0a3ce6;font-weight:bold;word-spacing:0px;letter-spacing:0px;">Reset</div>
<div style="position:absolute;left:933.0px;top:28.0px;width:13.5px;height:611.0px;background:linear-gradient(90deg,#c2c2c2 0%,#d0d0d0 100%);"></div>
<div style="position:absolute;left:910.2px;top:585.5px;font-size:9.8px;line-height:9.8px;white-space:nowrap;font-family:'Liberation Mono', monospace;color:#2a2a2a;">172.80m</div>
<div style="position:absolute;left:946.5px;top:25.0px;width:1.5px;height:614.0px;background:#a2a2a2;"></div>
<div style="position:absolute;left:948.0px;top:25.0px;width:2.0px;height:617.0px;background:#c6c6c6;"></div>
</body></html>
